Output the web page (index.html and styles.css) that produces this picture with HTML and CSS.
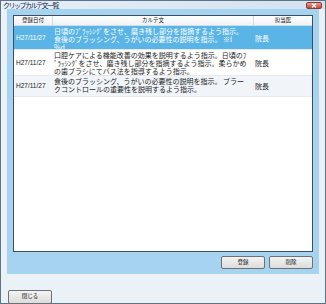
FILE: index.html
```html
<!DOCTYPE html>
<html lang="ja">
<head>
    <meta charset="UTF-8">
    <title>クリップカルテ文一覧</title>
    <link rel="stylesheet" href="styles.css">
</head>
<body>
    <div class="window">
        <!-- Title bar -->
        <div class="titlebar">
            <span class="title">クリップカルテ文一覧</span>
            <span class="close-btn">
                <svg width="6" height="5" viewBox="0 0 6 5"><path d="M1 0.5 L5 4.5 M5 0.5 L1 4.5" stroke="#fff" stroke-width="1.2"/></svg>
            </span>
        </div>

        <div class="frame">
            <div class="panel">
                <!-- Clip list -->
                <div class="list">
                    <div class="list-head">
                        <div class="head-cell">登録日付</div>
                        <div class="head-cell">カルテ文</div>
                        <div class="head-cell last">担当医</div>
                    </div>
                    <div class="row selected row-first">
                        <div class="date">H27/11/27</div>
                        <div class="text">日頃のﾌﾞﾗｯｼﾝｸﾞをさせ、磨き残し部分を指摘するよう指示。<br>食後のブラッシング、うがいの必要性の説明を指示。 ※l<br>%d</div>
                        <div class="doc">院長</div>
                    </div>
                    <div class="row row-second">
                        <div class="date">H27/11/27</div>
                        <div class="text">口腔ケアによる機能改善の効果を説明するよう指示。日頃のﾌ<br>ﾞﾗｯｼﾝｸﾞをさせ、磨き残し部分を指摘するよう指示。柔らかめ<br>の歯ブラシにてバス法を指導するよう指示。</div>
                        <div class="doc">院長</div>
                    </div>
                    <div class="row alt row-third">
                        <div class="date">H27/11/27</div>
                        <div class="text">食後のブラッシング、うがいの必要性の説明を指示。 ブラー<br>クコントロールの重要性を説明するよう指示。</div>
                        <div class="doc">院長</div>
                    </div>
                </div>

                <div class="panel-buttons">
                    <button class="btn">登録</button>
                    <button class="btn">削除</button>
                </div>
            </div>
        </div>

        <div class="footer">
            <button class="btn">閉じる</button>
        </div>
    </div>
</body>
</html>
```

FILE: styles.css
```css
* {
    box-sizing: border-box;
    margin: 0;
    padding: 0;
}

body {
    margin: 0;
    font-family: "Noto Sans CJK JP", sans-serif;
    background: #ffffff;
}

/* Window frame */
.window {
    width: 326px;
    height: 304px;
    border: 1px solid #5f7386;
    background-color: #eaf1f7;
    display: flex;
    flex-direction: column;
}

.titlebar {
    height: 13px;
    display: flex;
    align-items: center;
    padding: 0 3px 0 2px;
    background: linear-gradient(to right, #e6eff8, #d3e2f0);
}

.title {
    font-size: 7px;
    letter-spacing: -1.5px;
    color: #0f2540;
    line-height: 8px;
}

.close-btn {
    margin-left: auto;
    width: 16px;
    height: 7px;
    border: 1px solid #8a3a2e;
    border-radius: 2px;
    background: linear-gradient(#eba293, #c9452f);
    display: flex;
    align-items: center;
    justify-content: center;
}

.frame {
    padding: 0 6px;
}

/* Blue panel */
.panel {
    height: 265px;
    padding: 6px 6px 0;
    background-color: #a6d3ef;
    display: flex;
    flex-direction: column;
}

.list {
    height: 237px;
    border: 1px solid #3f4e5d;
    background-color: #ffffff;
    overflow: hidden;
}

.list-head {
    height: 10px;
    display: grid;
    grid-template-columns: 39px 201px 1fr;
    background: linear-gradient(#ffffff, #eef2f6);
    border-bottom: 1px solid #d5dde5;
}

.head-cell {
    font-size: 5.5px;
    line-height: 9px;
    text-align: center;
    color: #111;
    border-right: 1px solid #d3dae2;
}

.head-cell.last {
    border-right: none;
}

.row {
    display: grid;
    grid-template-columns: 39px 201px 1fr;
    border-bottom: 1px solid #e6eaee;
    color: #1a1a1a;
    font-size: 7px;
    line-height: 8px;
    overflow: hidden;
}

.row-first { height: 24px; }
.row-second { height: 26px; }
.row-third { height: 21px; }

.row.selected {
    background-color: #5ab5e6;
    color: #ffffff;
}

.row.alt {
    background-color: #f1f5f9;
}

.date {
    align-self: center;
    padding-left: 2px;
    font-family: "Liberation Sans", sans-serif;
    font-size: 6.5px;
}

.text {
    padding: 1px 0 0 1px;
    white-space: nowrap;
    overflow: hidden;
}

.doc {
    align-self: center;
    padding-left: 1px;
}

.panel-buttons {
    margin-top: 4px;
    display: flex;
    justify-content: flex-end;
    gap: 4px;
}

/* Buttons */
.btn {
    width: 44px;
    height: 13px;
    border: 1px solid #707070;
    border-radius: 2px;
    background: linear-gradient(#f4f4f4, #dcdcdc);
    font-family: "Noto Sans CJK JP", sans-serif;
    font-size: 5.5px;
    color: #111;
    line-height: 11px;
}

.footer {
    flex: 1;
    padding: 5px 7px 0;
}

.footer .btn {
    height: 14px;
}
```
